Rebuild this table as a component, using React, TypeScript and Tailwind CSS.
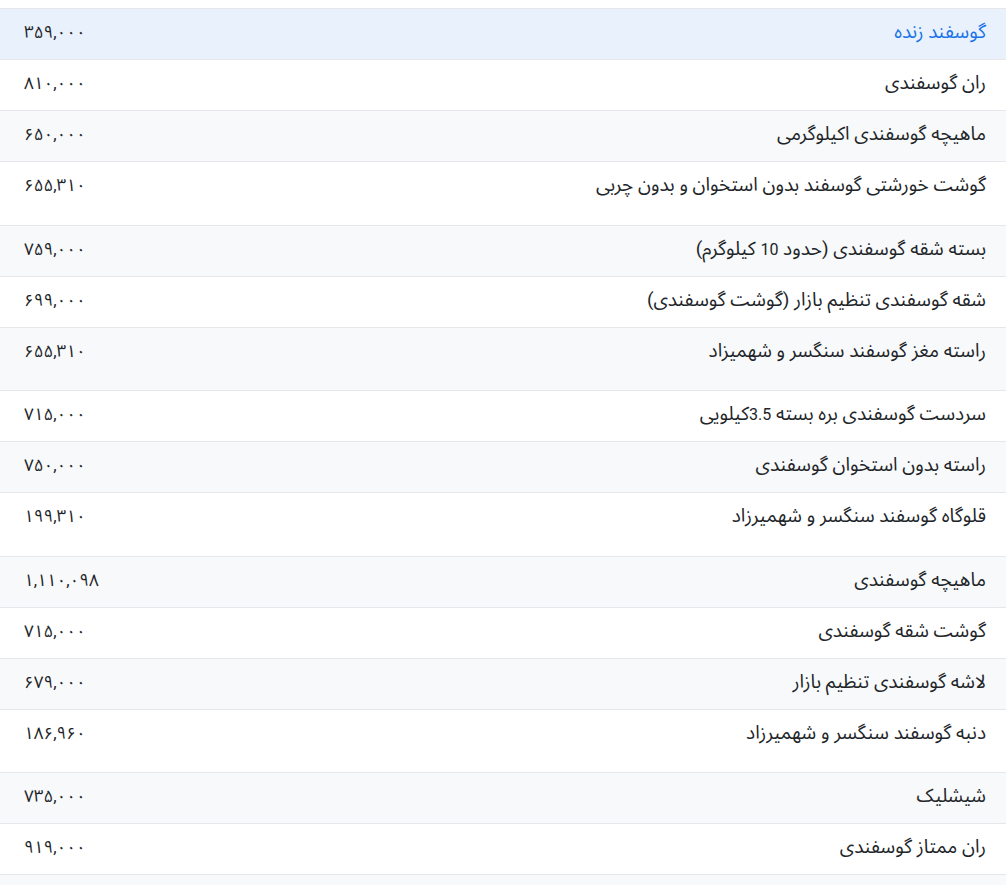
const rows: { name: string; price: string; tall?: boolean }[] = [
  { name: 'گوسفند زنده', price: '۳۵۹,۰۰۰' },
  { name: 'ران گوسفندی', price: '۸۱۰,۰۰۰' },
  { name: 'ماهیچه گوسفندی اکیلوگرمی', price: '۶۵۰,۰۰۰' },
  { name: 'گوشت خورشتی گوسفند بدون استخوان و بدون چربی', price: '۶۵۵,۳۱۰', tall: true },
  { name: 'بسته شقه گوسفندی (حدود 10 کیلوگرم)', price: '۷۵۹,۰۰۰' },
  { name: 'شقه گوسفندی تنظیم بازار (گوشت گوسفندی)', price: '۶۹۹,۰۰۰' },
  { name: 'راسته مغز گوسفند سنگسر و شهمیزاد', price: '۶۵۵,۳۱۰', tall: true },
  { name: 'سردست گوسفندی بره بسته 3.5کیلویی', price: '۷۱۵,۰۰۰' },
  { name: 'راسته بدون استخوان گوسفندی', price: '۷۵۰,۰۰۰' },
  { name: 'قلوگاه گوسفند سنگسر و شهمیرزاد', price: '۱۹۹,۳۱۰', tall: true },
  { name: 'ماهیچه گوسفندی', price: '۱,۱۱۰,۰۹۸' },
  { name: 'گوشت شقه گوسفندی', price: '۷۱۵,۰۰۰' },
  { name: 'لاشه گوسفندی تنظیم بازار', price: '۶۷۹,۰۰۰' },
  { name: 'دنبه گوسفند سنگسر و شهمیرزاد', price: '۱۸۶,۹۶۰', tall: true },
  { name: 'شیشلیک', price: '۷۳۵,۰۰۰' },
  { name: 'ران ممتاز گوسفندی', price: '۹۱۹,۰۰۰' },
  { name: '', price: '' },
];

// latin digits keep the smaller size, persian letters get the wider one
function Name({ text }: { text: string }) {
  return (
    <>
      {text.split(/([0-9.]+)/).map((part, i) =>
        /^[0-9.]+$/.test(part) ? (
          <span key={i} className="text-[16px]">
            {part}
          </span>
        ) : (
          part
        ),
      )}
    </>
  );
}

export default function App() {
  return (
    <div
      dir="rtl"
      className="w-[1006px] h-[885px] overflow-hidden bg-white pt-2 text-[16px] leading-6 text-[#212529]"
      style={{ fontFamily: 'Roboto, "Noto Sans Arabic", "DejaVu Sans", sans-serif' }}
    >
      {rows.map((row, i) => {
        const first = i === 0;
        const bg = first ? 'bg-[#e8f1fc]' : i % 2 === 0 ? 'bg-[#f8f9fa]' : 'bg-white';
        return (
          <div
            key={i}
            className={`flex items-start justify-between overflow-hidden border-t border-[#e5e7eb] pt-[11px] ${row.tall ? 'h-[63.5px]' : 'h-[51px]'} ${bg}`}
          >
            <span className={`pr-5 text-[19px] leading-6 ${first ? 'text-[#1a73e8]' : ''}`}>
              <Name text={row.name} />
            </span>
            <span className="pl-6 text-left text-[17px]">{row.price}</span>
          </div>
        );
      })}
    </div>
  );
}
